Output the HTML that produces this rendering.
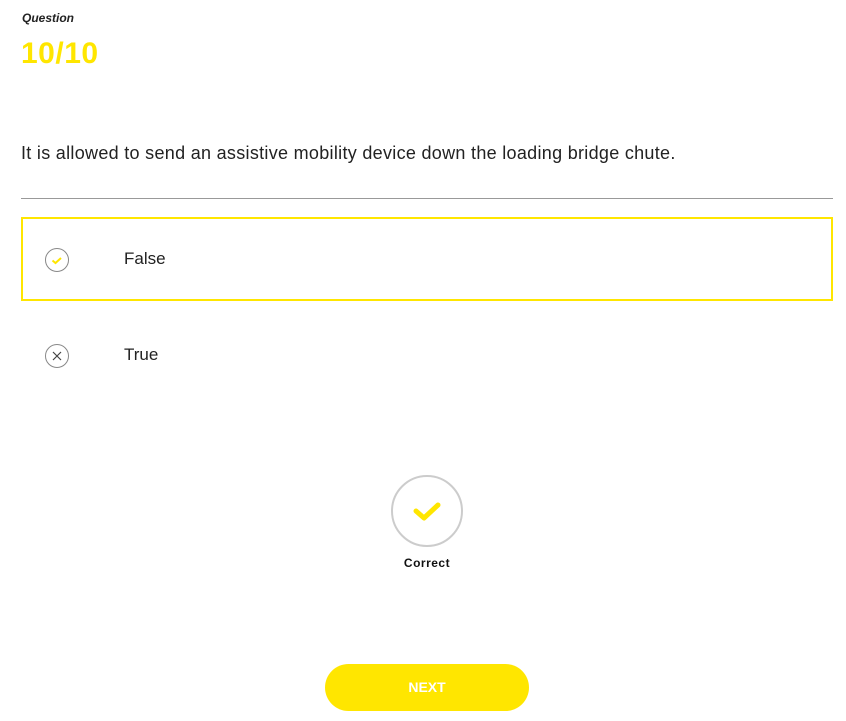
<!DOCTYPE html>
<html><head><meta charset="utf-8"><style>
body{margin:0;width:846px;height:721px;background:#fff;font-family:"Liberation Sans",sans-serif;position:relative;overflow:hidden;color:#222}
.a{position:absolute}
</style></head><body>
<div class="a" style="left:22px;top:11px;font-size:12px;font-style:italic;font-weight:bold;color:#222">Question</div>
<div class="a" style="left:21px;top:37px;font-size:30px;font-weight:bold;color:#ffe600;letter-spacing:0.5px">10/10</div>
<div class="a" style="left:21px;top:143px;font-size:18px;letter-spacing:0.3px;color:#222">It is allowed to send an assistive mobility device down the loading bridge chute.</div>
<div class="a" style="left:21px;top:198px;width:812px;height:1px;background:#999"></div>
<div class="a" style="left:21px;top:217px;width:808px;height:80px;border:2px solid #ffe600"></div>
<svg class="a" style="left:44px;top:247px" width="26" height="26" viewBox="0 0 26 26"><circle cx="13" cy="13" r="11.5" fill="none" stroke="#888" stroke-width="1"/><path d="M8.5 13.5l3 2.5 5.5-5" fill="none" stroke="#ffe600" stroke-width="2"/></svg>
<div class="a" style="left:124px;top:249px;font-size:17px;color:#222">False</div>
<svg class="a" style="left:44px;top:343px" width="26" height="26" viewBox="0 0 26 26"><circle cx="13" cy="13" r="11.5" fill="none" stroke="#888" stroke-width="1"/><path d="M9 9l8 8M17 9l-8 8" stroke="#444" stroke-width="1.2"/></svg>
<div class="a" style="left:124px;top:345px;font-size:17px;color:#222">True</div>
<svg class="a" style="left:390px;top:475px" width="74" height="74" viewBox="0 0 74 74"><circle cx="37" cy="36" r="35" fill="none" stroke="#ccc" stroke-width="2"/><path d="M26 36l8 7 14-13" fill="none" stroke="#ffe600" stroke-width="5" stroke-linecap="round" stroke-linejoin="round"/></svg>
<div class="a" style="left:327px;top:556px;width:200px;text-align:center;font-size:12px;font-weight:bold;color:#111;letter-spacing:0.5px">Correct</div>
<div class="a" style="left:325px;top:664px;width:204px;height:47px;border-radius:24px;background:#ffe600;color:#fff;font-weight:bold;font-size:14px;line-height:47px;text-align:center">NEXT</div>
</body></html>
